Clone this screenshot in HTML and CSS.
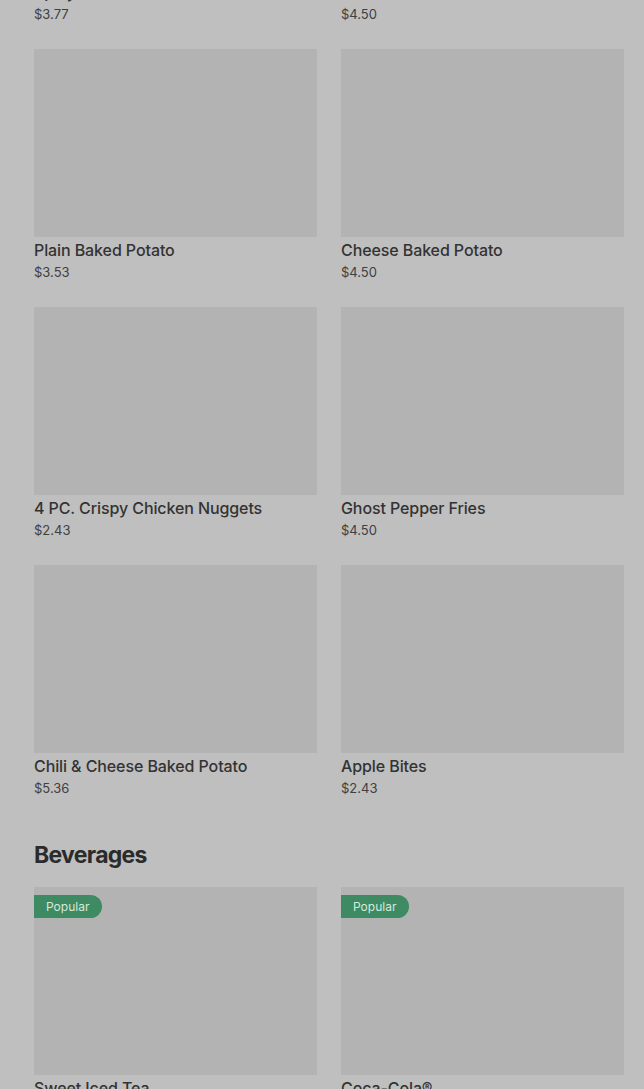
FILE: index.html
```html
<!DOCTYPE html>
<html lang="en">
<head>
    <meta charset="UTF-8">
    <meta name="viewport" content="width=device-width, initial-scale=1.0">
    <title>Menu</title>
    <link rel="stylesheet" href="styles.css">
</head>
<body>

    <div class="menu">
        <section class="category scrolled">
            <div class="item-grid">
                <div class="item">
                    <div class="item-photo"></div>
                    <div class="item-name">Spicy Chicken Caesar Salad with Croutons</div>
                    <div class="item-price">$3.77</div>
                </div>
                <div class="item">
                    <div class="item-photo"></div>
                    <div class="item-name">Chili Cheese Fries</div>
                    <div class="item-price">$4.50</div>
                </div>
                <div class="item">
                    <div class="item-photo"></div>
                    <div class="item-name">Plain Baked Potato</div>
                    <div class="item-price">$3.53</div>
                </div>
                <div class="item">
                    <div class="item-photo"></div>
                    <div class="item-name">Cheese Baked Potato</div>
                    <div class="item-price">$4.50</div>
                </div>
                <div class="item">
                    <div class="item-photo"></div>
                    <div class="item-name">4 PC. Crispy Chicken Nuggets</div>
                    <div class="item-price">$2.43</div>
                </div>
                <div class="item">
                    <div class="item-photo"></div>
                    <div class="item-name">Ghost Pepper Fries</div>
                    <div class="item-price">$4.50</div>
                </div>
                <div class="item">
                    <div class="item-photo"></div>
                    <div class="item-name">Chili &amp; Cheese Baked Potato</div>
                    <div class="item-price">$5.36</div>
                </div>
                <div class="item">
                    <div class="item-photo"></div>
                    <div class="item-name">Apple Bites</div>
                    <div class="item-price">$2.43</div>
                </div>
            </div>
        </section>

        <section class="category">
            <h2 class="category-title">Beverages</h2>
            <div class="item-grid">
                <div class="item">
                    <div class="item-photo">
                        <span class="badge">Popular</span>
                    </div>
                    <div class="item-name">Sweet Iced Tea</div>
                    <div class="item-price">$2.19</div>
                </div>
                <div class="item">
                    <div class="item-photo">
                        <span class="badge">Popular</span>
                    </div>
                    <div class="item-name">Coca-Cola®</div>
                    <div class="item-price">$2.19</div>
                </div>
            </div>
        </section>
    </div>

</body>
</html>
```

FILE: styles.css
```css
body {
    margin: 0;
    background: #bfbfbf;
    font-family: Inter, "Noto Sans", sans-serif;
    color: #2e2e2e;
    overflow: hidden;
}

.menu {
    padding: 0 20px 0 34px;
}

/* page is scrolled so the first row is cut off at the top */
.scrolled {
    margin-top: -209px;
}

.item-grid {
    display: grid;
    grid-template-columns: 283px 283px;
    column-gap: 24px;
    row-gap: 25px;
}

.item-photo {
    position: relative;
    height: 188px;
    background: #b3b3b3;
}

.item-name {
    margin-top: 1px;
    font-size: 16px;
    font-weight: 500;
    line-height: 24px;
    color: #333333;
    white-space: nowrap;
    overflow: hidden;
    text-overflow: ellipsis;
    letter-spacing: -0.1px;
}

.item-price {
    font-size: 13px;
    line-height: 20px;
    color: #404040;
}

.category-title {
    margin: 41px 0 16px;
    font-size: 23px;
    line-height: 32px;
    font-weight: 700;
    letter-spacing: -0.7px;
    color: #2b2b2b;
}

.badge {
    position: absolute;
    top: 8px;
    left: 0;
    height: 23px;
    line-height: 23px;
    padding: 0 13px 0 12px;
    font-size: 12px;
    color: #d6e9dc;
    background: #3e8a62;
    border-radius: 0 12px 12px 0;
}
```
